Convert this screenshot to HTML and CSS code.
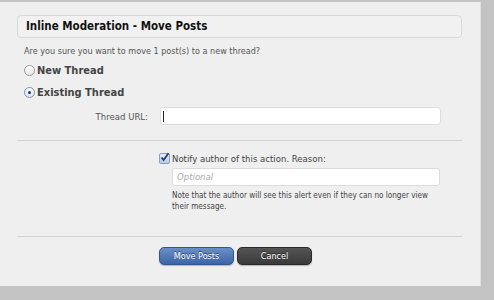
FILE: index.html
```html
<!DOCTYPE html>
<html lang="en">
<head>
<meta charset="UTF-8">
<title>Inline Moderation - Move Posts</title>
<link rel="stylesheet" href="styles.css">
</head>
<body>
<div class="overlay">
  <form class="dialog">
    <h2 class="dialog_title">Inline Moderation - Move Posts</h2>
    <p class="explain">Are you sure you want to move 1 post(s) to a new thread?</p>
    <label class="choice"><span class="radio"></span>New Thread</label>
    <label class="choice"><span class="radio checked"></span>Existing Thread</label>
    <div class="ctrl_row">
      <span class="ctrl_label">Thread URL:</span>
      <span class="text_box"><span class="caret"></span></span>
    </div>
    <hr class="sep">
    <div class="notify">
      <label class="notify_label"><span class="check">
        <svg width="11" height="11" viewBox="0 0 11 11"><path d="M2.5 5.5 L4.6 8 L9.5 1.2" fill="none" stroke="#1e3f7a" stroke-width="1.8"/></svg>
      </span>Notify author of this action. Reason:</label>
      <span class="text_box reason">Optional</span>
      <p class="hint">Note that the author will see this alert even if they can no longer view their message.</p>
    </div>
    <hr class="sep lower">
    <div class="buttons">
      <span class="button primary">Move Posts</span>
      <span class="button">Cancel</span>
    </div>
  </form>
</div>
</body>
</html>
```

FILE: styles.css
```css
* {margin:0; padding:0; box-sizing: border-box;}
body {width: 494px; height: 300px; background: #c3c3c3; font-family: "DejaVu Sans Condensed", "DejaVu Sans", Verdana, sans-serif; overflow: hidden;}
.overlay {padding-top: 2px;}
.dialog {display: block; width: 481px; height: 284px; background: #efefef; padding: 13px 18px 0 17px; border-right: 1px solid #e2e2e2;}
.dialog_title {height: 23px; border: 1px solid #d9d9d9; border-radius: 4px; background: #f1f1f1; font-size: 11.5px; font-weight: bold; color: #111; padding: 0 8px; line-height: 21px;}
.explain {font-size: 9px; color: #555; margin: 7px 0 0 7px; line-height: 12px;}
.choice {display: flex; align-items: center; font-size: 11px; font-weight: bold; color: #444; margin: 4px 0 0 7px; height: 18px;}
.choice + .choice {margin-top: 4px;}
.radio {width: 11px; height: 11px; border-radius: 50%; border: 1px solid #999; background: linear-gradient(#fff, #e6e6e6); margin-right: 2px; position: relative;}
.radio.checked {border-color: #7790b8; background: linear-gradient(#fdfdfd, #dbe6f3);}
.radio.checked::after {content: ""; position: absolute; left: 3px; top: 3px; width: 3px; height: 3px; border-radius: 50%; background: #233a66;}
.ctrl_row {display: flex; align-items: center; margin-top: 6px;}
.ctrl_label {width: 132px; text-align: right; font-size: 9.5px; color: #555; padding-right: 1px;}
.text_box {display: block; background: #fff; border: 1px solid #dcdcdc; border-radius: 3px; height: 18px;}
.ctrl_row .text_box {width: 281px; margin-left: 11px; padding: 3px 0 0 2px;}
.caret {display: block; width: 1px; height: 11px; background: #222;}
.sep {border: 0; border-top: 1px solid #d3d3d3; margin-top: 15px;}
.notify {padding-left: 143px; margin-top: 11px;}
.notify_label {display: flex; align-items: center; font-size: 9.5px; color: #444; height: 13px; margin-left: -1px;}
.check {width: 11px; height: 11px; border: 1px solid #8aa0c4; border-radius: 2px; background: linear-gradient(#e9eff8, #b9cbe6); margin-right: 2px; position: relative;}
.check svg {position: absolute; left: -1px; top: -2px;}
.reason {width: 268px; margin: 3px 0 0 12px; font-size: 9.5px; font-style: italic; color: #aaa; padding: 2px 0 0 4px;}
.hint {font-size: 8.1px; color: #444; line-height: 11px; margin: 4px 0 0 12px; width: 262px;}
.sep.lower {margin-top: 24px;}
.buttons {display: flex; justify-content: center; gap: 3px; margin-top: 10px; padding-right: 8px;}
.button {display: block; width: 75px; height: 18px; border-radius: 5px; font-size: 9px; color: #fff; text-align: center; line-height: 17px; text-shadow: 0 -1px 0 rgba(0,0,0,0.5); background: linear-gradient(#555, #3a3a3a); border: 1px solid #2a2a2a; box-shadow: 0 1px 1px rgba(0,0,0,0.25);}
.button.primary {background: linear-gradient(#6a8fc7, #3d64a6); border-color: #34558e;}
```
